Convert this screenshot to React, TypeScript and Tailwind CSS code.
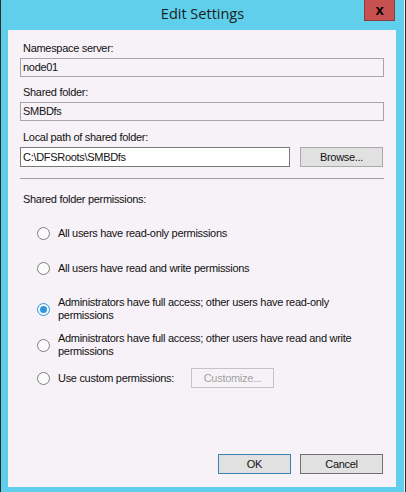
import React from 'react';

const Radio: React.FC<{ checked?: boolean }> = ({ checked }) => (
    <span
        className={
            checked
                ? 'flex h-[13px] w-[13px] shrink-0 items-center justify-center rounded-full border border-[#2f97dd] bg-[#f4f9fd]'
                : 'flex h-[13px] w-[13px] shrink-0 items-center justify-center rounded-full border border-[#7d7d7d] bg-[#fbfbfb]'
        }
    >
        {checked && <span className="h-[7px] w-[7px] rounded-full bg-[#2f97dd]" />}
    </span>
);

interface OptionProps {
    lines: string[];
    checked?: boolean;
    className?: string;
    children?: React.ReactNode;
}

const Option: React.FC<OptionProps> = ({ lines, checked, className, children }) => (
    <div className={`flex items-center gap-[8px] pl-[17px] ${className ?? ''}`}>
        <Radio checked={checked} />
        <div className="whitespace-nowrap leading-[13px]">
            {lines.map((l, i) => (
                <div key={i}>{l}</div>
            ))}
        </div>
        {children}
    </div>
);

const App: React.FC = () => {
    return (
        <div className="flex h-[492px] w-[406px] bg-[#2b2b2b] font-['Liberation_Sans',Arial,sans-serif] text-[11px] tracking-[-0.3px] text-[#111]">
            {/* dialog window */}
            <div className="ml-[1px] flex w-[403px] flex-col bg-[#5fcfeb]">
                {/* title bar */}
                <div className="grid h-[30px] shrink-0 grid-cols-[1fr_auto_1fr]">
                    <div />
                    <div className="pt-[4px] font-['Open_Sans',sans-serif] text-[14.5px] leading-[20px] tracking-normal text-[#1c1c1c]">
                        Edit Settings
                    </div>
                    <div className="flex justify-end pr-[9px]">
                        <div className="flex h-[21px] w-[31px] items-center justify-center border-x border-b border-[#8a3b3b] bg-[#c75050] pb-[2px] text-[15px] font-bold leading-none text-black">
                            x
                        </div>
                    </div>
                </div>

                {/* content panel */}
                <div className="ml-[7px] flex h-[457px] w-[388px] flex-col bg-[#f7f2f7] px-[12px] pt-[12px]">
                    <div className="pl-[3px] leading-[13px]">Namespace server:</div>
                    <div className="mt-[3px] flex h-[19px] items-center border border-[#a6a6a6] px-[2px]">node01</div>

                    <div className="mt-[9px] pl-[3px] leading-[13px]">Shared folder:</div>
                    <div className="mt-[3px] flex h-[19px] items-center border border-[#a6a6a6] px-[2px]">SMBDfs</div>

                    <div className="mt-[10px] pl-[3px] leading-[13px]">Local path of shared folder:</div>
                    <div className="mt-[3px] flex gap-[10px]">
                        <div className="flex h-[20px] w-[270px] items-center border border-[#7a7a7a] bg-white px-[2px]">
                            C:\DFSRoots\SMBDfs
                        </div>
                        <div className="flex h-[20px] w-[83px] items-center justify-center border border-[#a9a9a9] bg-[#e1e1e1]">
                            Browse...
                        </div>
                    </div>

                    <div className="mt-[11px] h-px bg-[#a0a0a0]" />

                    <div className="mt-[14px] pl-[3px] leading-[13px]">Shared folder permissions:</div>

                    <Option className="mt-[21px]" lines={['All users have read-only permissions']} />
                    <Option className="mt-[22px]" lines={['All users have read and write permissions']} />
                    <Option
                        className="mt-[21px]"
                        checked
                        lines={['Administrators have full access; other users have read-only', 'permissions']}
                    />
                    <Option
                        className="mt-[10px]"
                        lines={['Administrators have full access; other users have read and write', 'permissions']}
                    />
                    <Option className="mt-[10px]" lines={['Use custom permissions:']}>
                        <div className="ml-[9px] flex h-[20px] w-[83px] items-center justify-center border border-[#c4c4c4] text-[#a3a3a3]">
                            Customize...
                        </div>
                    </Option>

                    <div className="mt-auto mb-[13px] flex justify-end gap-[9px] pr-[1px]">
                        <div className="flex h-[20px] w-[73px] items-center justify-center border border-[#3c7fb1] bg-[#e1e1e1]">
                            OK
                        </div>
                        <div className="flex h-[20px] w-[83px] items-center justify-center border border-[#707070] bg-[#e1e1e1]">
                            Cancel
                        </div>
                    </div>
                </div>
            </div>
            <div className="w-px bg-[#f0f0f0]" />
        </div>
    );
};

export default App;
